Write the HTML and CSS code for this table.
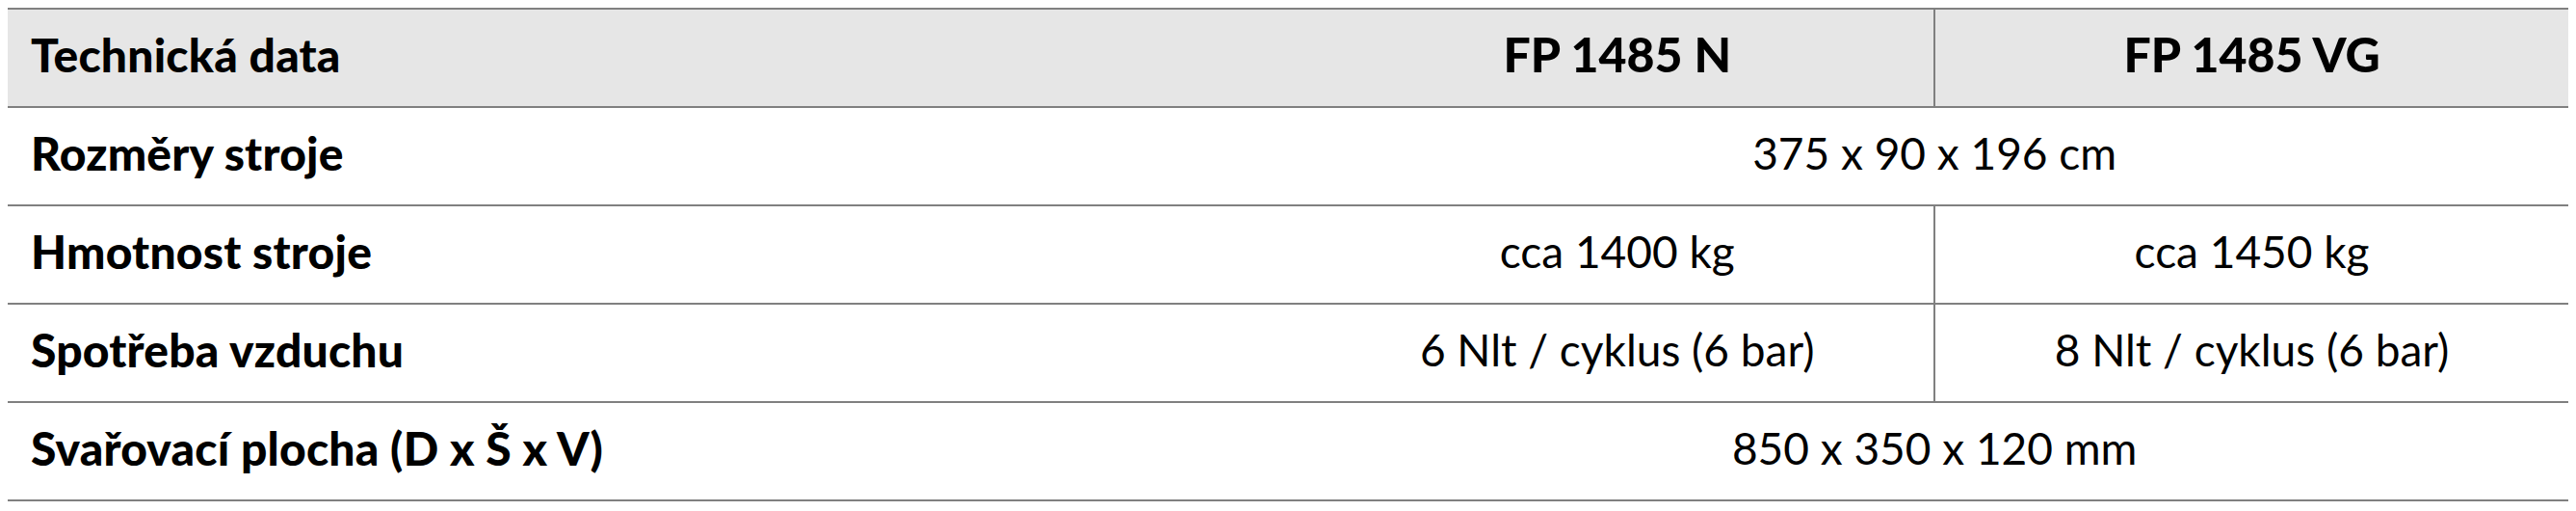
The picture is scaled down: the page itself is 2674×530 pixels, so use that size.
FILE: index.html
```html
<!DOCTYPE html>
<html lang="cs">
<head>
<meta charset="utf-8">
<title>Technická data</title>
<link rel="stylesheet" href="styles.css">
</head>
<body>
<table class="spec">
  <colgroup>
    <col class="c-label">
    <col class="c-val">
    <col class="c-val">
  </colgroup>
  <thead>
    <tr class="head">
      <th class="label">Technická data</th>
      <th class="model">FP 1485 N</th>
      <th class="model last">FP 1485 VG</th>
    </tr>
  </thead>
  <tbody>
    <tr>
      <th class="label">Rozměry stroje</th>
      <td class="val" colspan="2">375 x 90 x 196 cm</td>
    </tr>
    <tr>
      <th class="label">Hmotnost stroje</th>
      <td class="val">cca 1400 kg</td>
      <td class="val last">cca 1450 kg</td>
    </tr>
    <tr>
      <th class="label">Spotřeba vzduchu</th>
      <td class="val">6 Nlt / cyklus (6 bar)</td>
      <td class="val last">8 Nlt / cyklus (6 bar)</td>
    </tr>
    <tr>
      <th class="label">Svařovací plocha (D x Š x V)</th>
      <td class="val" colspan="2">850 x 350 x 120 mm</td>
    </tr>
  </tbody>
</table>
</body>
</html>
```

FILE: styles.css
```css
html, body {
  margin: 0;
  padding: 0;
  background: #ffffff;
}

body {
  padding: 8px;
  font-family: "Lato", "Noto Sans", sans-serif;
  color: #000000;
}

.spec {
  width: 100%;
  border-collapse: collapse;
  table-layout: fixed;
}

.c-label { width: 50.5%; }
.c-val { width: 24.75%; }

.spec tr {
  height: 102px;
  border-top: 2px solid #808080;
  border-bottom: 2px solid #808080;
}

.head {
  background: #e6e6e6;
}

.spec th,
.spec td {
  padding: 0 0 8px 0;
  vertical-align: middle;
}

.label {
  text-align: left;
  padding-left: 24px !important;
  font-weight: 900;
  font-size: 48px;
  letter-spacing: 0.2px;
}

.model {
  text-align: center;
  font-weight: 900;
  font-size: 50px;
}

.val {
  text-align: center;
  font-weight: 400;
  font-size: 46px;
  letter-spacing: 0;
}

.last {
  border-left: 2px solid #808080;
}
```
